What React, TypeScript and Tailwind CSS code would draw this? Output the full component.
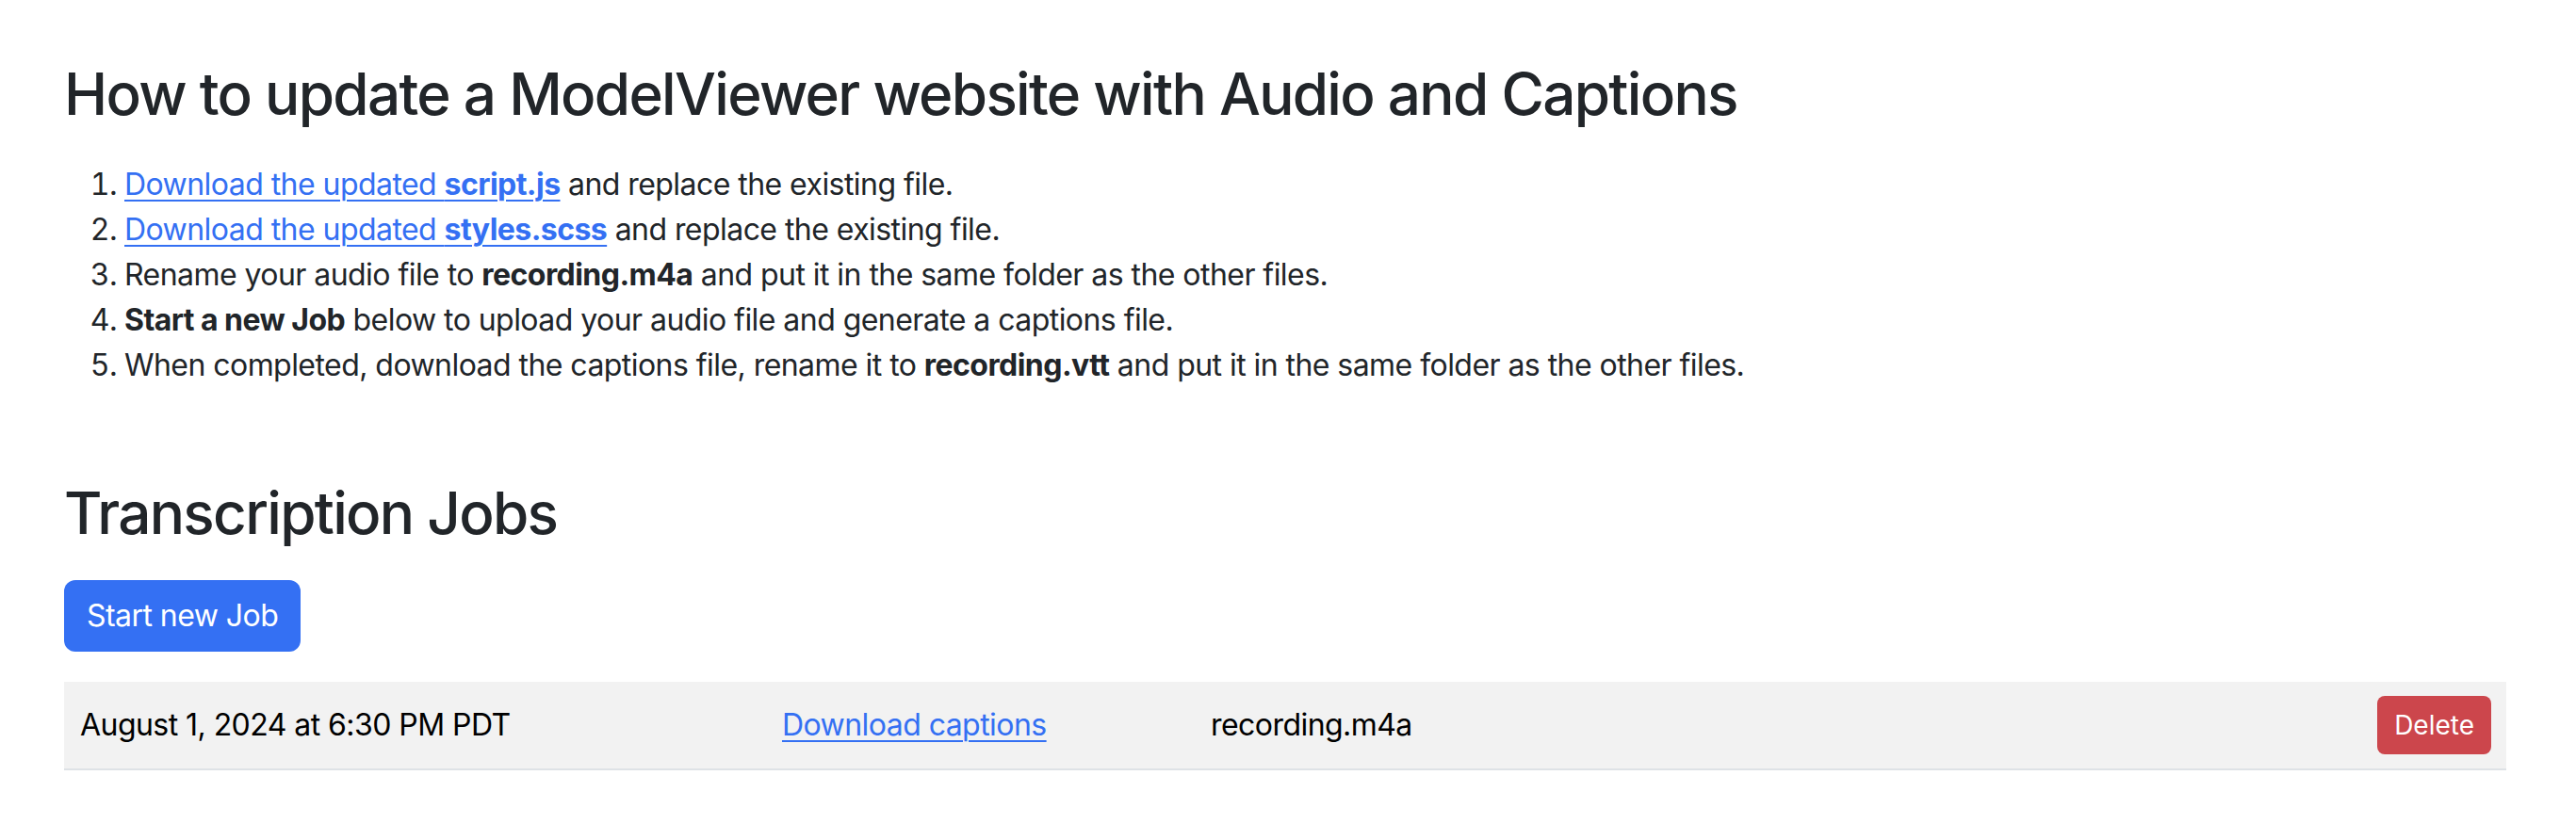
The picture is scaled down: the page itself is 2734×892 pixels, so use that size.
import React from "react";

const steps = [
  <>
    <a href="#" className="text-[#3470f3] underline decoration-2 underline-offset-[5px]">
      Download the updated <strong className="font-bold">script.js</strong>
    </a>{" "}
    and replace the existing file.
  </>,
  <>
    <a href="#" className="text-[#3470f3] underline decoration-2 underline-offset-[5px]">
      Download the updated <strong className="font-bold">styles.scss</strong>
    </a>{" "}
    and replace the existing file.
  </>,
  <>
    Rename your audio file to <strong className="font-bold">recording.m4a</strong> and put it in the same folder as the other files.
  </>,
  <>
    <strong className="font-bold">Start a new Job</strong> below to upload your audio file and generate a captions file.
  </>,
  <>
    When completed, download the captions file, rename it to <strong className="font-bold">recording.vtt</strong> and put it in the
    same folder as the other files.
  </>,
];

export default function App() {
  return (
    <div className="min-h-screen bg-white font-['Inter','Liberation_Sans',sans-serif] tracking-[-0.55px] text-[#212529]">
      <div className="pl-[68px] pr-[74px] pt-[62px]">
        {/* Instructions */}
        <h2 className="text-[62px] font-medium leading-[76.8px] tracking-[-1.7px]">
          How to update a ModelViewer website with Audio and Captions
        </h2>
        <ol className="mt-[33px] list-decimal pl-[64px] text-[32px] leading-[48px]">
          {steps.map((s, i) => (
            <li key={i}>{s}</li>
          ))}
        </ol>

        {/* Jobs */}
        <h2 className="mt-[95px] text-[62px] font-medium leading-[76.8px] tracking-[-1.7px]">Transcription Jobs</h2>
        <button className="mt-[32px] h-[76px] rounded-[12px] bg-[#3470f3] px-[24px] text-[32px] leading-[48px] text-white">
          Start new Job
        </button>

        <div className="mt-[32px] grid h-[94px] grid-cols-[745px_455px_1fr_auto] items-center border-b-2 border-[#dee2e6] bg-[#f2f2f2] text-[32px] text-black">
          <div className="px-[17px]">August 1, 2024 at 6:30 PM PDT</div>
          <div className="px-[17px]">
            <a href="#" className="text-[#3470f3] underline decoration-2 underline-offset-[5px]">
              Download captions
            </a>
          </div>
          <div className="px-[17px]">recording.m4a</div>
          <div className="pr-[16px]">
            <button className="h-[62px] rounded-[8px] bg-[#cc464c] px-[18px] text-[28px] leading-[42px] tracking-normal text-white">
              Delete
            </button>
          </div>
        </div>
      </div>
    </div>
  );
}
